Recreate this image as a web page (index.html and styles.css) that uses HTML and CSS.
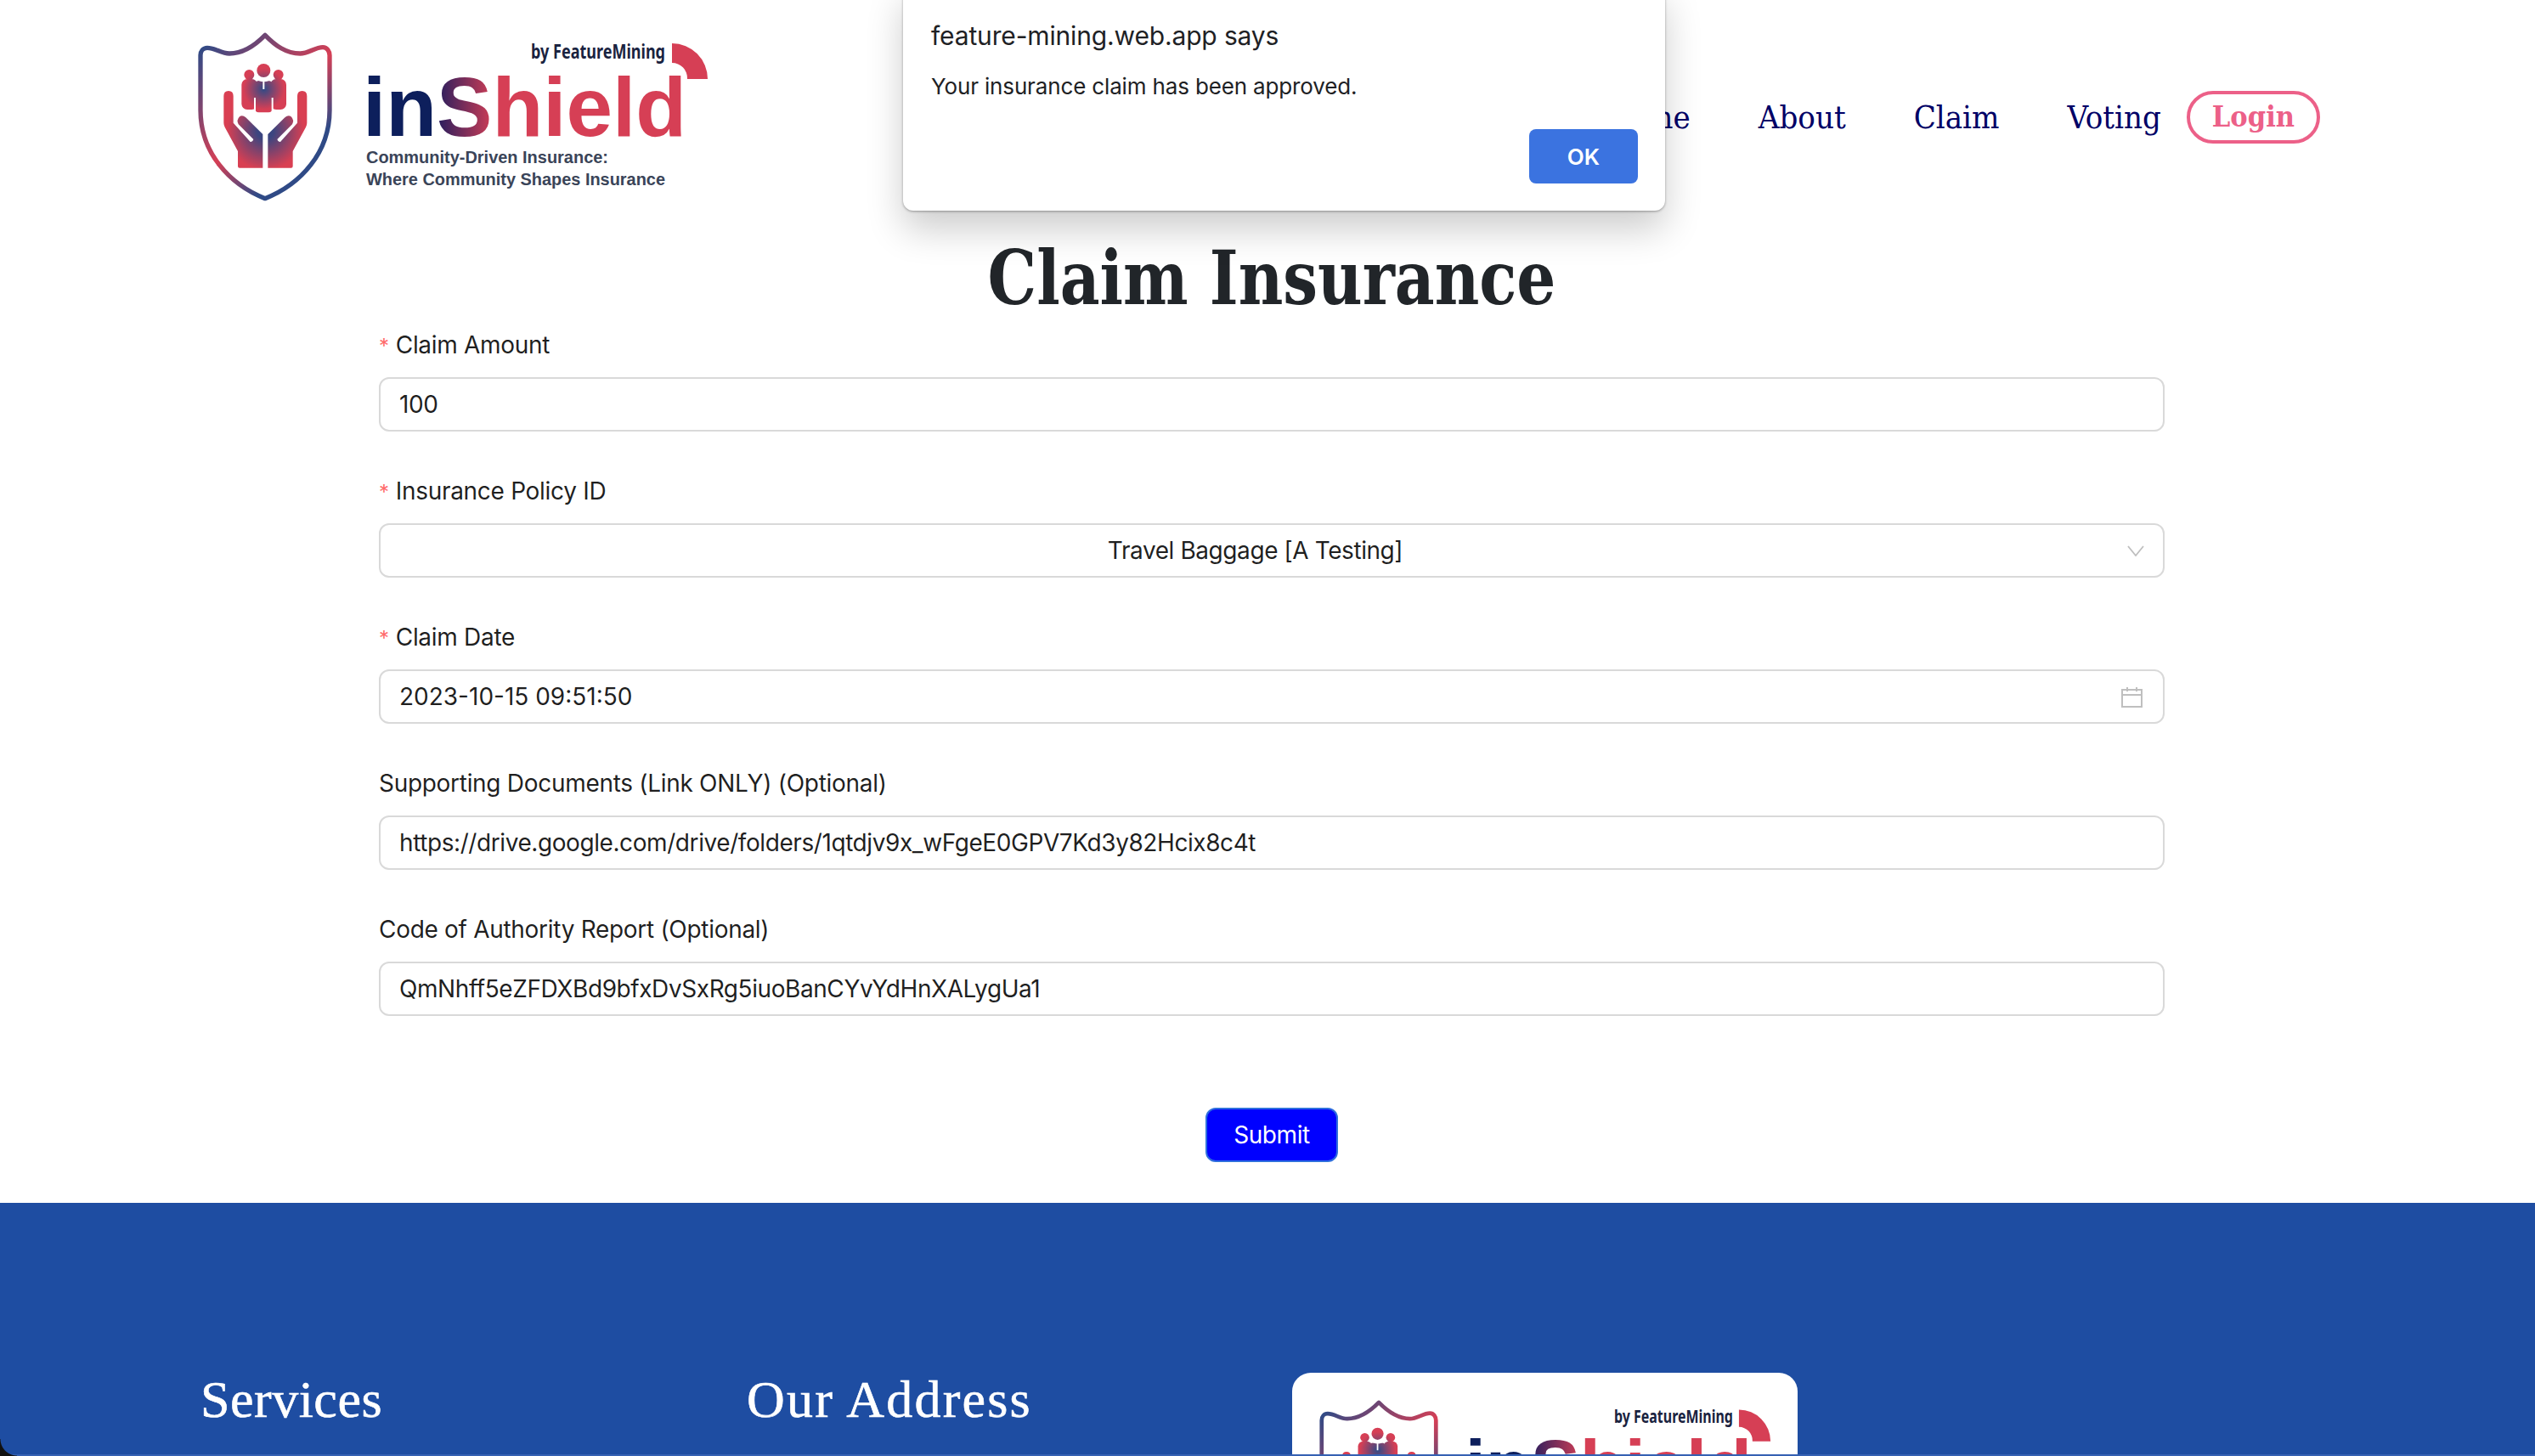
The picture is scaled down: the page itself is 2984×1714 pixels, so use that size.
FILE: index.html
```html
<!DOCTYPE html>
<html lang="en">
<head>
  <meta charset="UTF-8">
  <title>inShield - Claim Insurance</title>
  <link rel="stylesheet" href="styles.css">
</head>
<body>

  <!-- shared gradients and the shield mark, used by both logos -->
  <svg class="defs" width="0" height="0" aria-hidden="true">
    <defs>
      <linearGradient id="shield-stroke" gradientUnits="userSpaceOnUse" x1="48" y1="80" x2="504" y2="560">
        <stop offset="0" stop-color="#2f4a86"/>
        <stop offset="0.5" stop-color="#d63f55"/>
        <stop offset="0.78" stop-color="#2f4a86"/>
      </linearGradient>
      <radialGradient id="hands-fill" gradientUnits="userSpaceOnUse" cx="276" cy="375" r="135">
        <stop offset="0.2" stop-color="#3b4580"/>
        <stop offset="1" stop-color="#d93f52"/>
      </radialGradient>
      <radialGradient id="people-fill" gradientUnits="userSpaceOnUse" cx="272" cy="225" r="72">
        <stop offset="0" stop-color="#2f4a86"/>
        <stop offset="1" stop-color="#d63f55"/>
      </radialGradient>
      <linearGradient id="letter-s" gradientUnits="userSpaceOnUse" x1="284" y1="0" x2="350" y2="0">
        <stop offset="0" stop-color="#2e1f5e"/>
        <stop offset="1" stop-color="#d63f55"/>
      </linearGradient>
      <symbol id="shield-mark" viewBox="40 25 472 597">
        <path fill="none" stroke="url(#shield-stroke)" stroke-width="16" stroke-linejoin="round" d="M276 35C240 72 200 100 150 100C120 100 100 80 72 80C57 80 48 92 48 106L48 300C48 450 150 562 276 612C402 562 504 450 504 300L504 106C504 92 495 78 480 78C452 78 430 100 400 100C350 100 312 72 276 35Z"/>
        <g fill="url(#people-fill)">
          <circle cx="220" cy="175" r="18"/>
          <circle cx="323" cy="175" r="18"/>
          <rect x="193" y="190" width="56" height="108" rx="20"/>
          <rect x="295" y="190" width="56" height="108" rx="20"/>
          <ellipse cx="271" cy="160" rx="24" ry="24"/>
          <rect x="238" y="196" width="66" height="112" rx="16"/>
        </g>
        <path fill="none" stroke="#fff" stroke-width="6" d="M238 183C250 192 258 197 271 197C284 197 294 192 305 183M271 197L271 226M240 256V306M302 256V306"/>
        <path fill="url(#hands-fill)" id="hand-left" d="M130 250Q130 232 147 232Q164 232 164 250L164 345L224 412Q232 414 235 403L182 350Q174 335 186 323Q196 316 208 326L268 385L268 504L186 504Q180 504 180 498L180 445L134 360Q130 352 130 345Z"/>
        <use href="#hand-left" transform="matrix(-1 0 0 1 554 0)"/>
      </symbol>
    </defs>
  </svg>

  <header class="site-header">
    <svg class="logo" viewBox="0 0 602 200" width="602" height="200" role="img">
      <use href="#shield-mark" x="0" y="0" width="158" height="199"/>
      <text class="logo-by" x="392" y="31" textLength="158" lengthAdjust="spacingAndGlyphs">by FeatureMining</text>
      <path class="logo-arc" d="M558 13A42 42 0 0 1 600 55L576 55A18 18 0 0 0 558 36Z"/>
      <text class="logo-name" x="194" y="122"><tspan class="ink">in</tspan><tspan fill="url(#letter-s)">S</tspan><tspan class="red">hield</tspan></text>
      <text class="logo-tag" x="198" y="154" textLength="285" lengthAdjust="spacingAndGlyphs">Community-Driven Insurance:</text>
      <text class="logo-tag" x="198" y="180" textLength="352" lengthAdjust="spacingAndGlyphs">Where Community Shapes Insurance</text>
    </svg>
    <nav class="site-nav">
      <a href="#">Home</a>
      <a href="#">About</a>
      <a href="#">Claim</a>
      <a href="#">Voting</a>
      <a href="#" class="login">Login</a>
    </nav>
  </header>

  <main class="claim-page">
    <h1>Claim Insurance</h1>

    <form class="claim-form">
      <div class="form-item">
        <label class="required" for="amount">Claim Amount</label>
        <div class="control"><input id="amount" type="text" value="100"></div>
      </div>
      <div class="form-item">
        <label class="required">Insurance Policy ID</label>
        <div class="control select">
          <span class="select-value">Travel Baggage [A Testing]</span>
          <svg class="chevron" viewBox="0 0 20 13" width="20" height="13"><path d="M1 1L10 12L19 1" fill="none" stroke="#bfbfbf" stroke-width="1.8"/></svg>
        </div>
      </div>
      <div class="form-item">
        <label class="required" for="date">Claim Date</label>
        <div class="control">
          <input id="date" type="text" value="2023-10-15 09:51:50">
          <svg class="calendar" viewBox="0 0 25 25" width="25" height="25"><path d="M1 4H24V24H1ZM1 10H24M7 1V6M18 1V6" fill="none" stroke="#bfbfbf" stroke-width="2"/></svg>
        </div>
      </div>
      <div class="form-item">
        <label for="docs">Supporting Documents (Link ONLY) (Optional)</label>
        <div class="control"><input id="docs" type="text" value="https://drive.google.com/drive/folders/1qtdjv9x_wFgeE0GPV7Kd3y82Hcix8c4t"></div>
      </div>
      <div class="form-item">
        <label for="report">Code of Authority Report (Optional)</label>
        <div class="control"><input id="report" type="text" value="QmNhff5eZFDXBd9bfxDvSxRg5iuoBanCYvYdHnXALygUa1"></div>
      </div>
      <div class="form-actions">
        <button type="button" class="submit">Submit</button>
      </div>
    </form>
  </main>

  <footer class="site-footer">
    <div class="footer-col"><h2>Services</h2></div>
    <div class="footer-col"><h2>Our Address</h2></div>
    <div class="footer-card">
      <svg class="logo" viewBox="0 0 602 200" width="533" height="177" role="img">
        <use href="#shield-mark" x="0" y="0" width="158" height="199"/>
        <text class="logo-by" x="392" y="31" textLength="158" lengthAdjust="spacingAndGlyphs">by FeatureMining</text>
        <path class="logo-arc" d="M558 13A42 42 0 0 1 600 55L576 55A18 18 0 0 0 558 36Z"/>
        <text class="logo-name" x="194" y="122"><tspan class="ink">in</tspan><tspan fill="url(#letter-s)">S</tspan><tspan class="red">hield</tspan></text>
      </svg>
    </div>
  </footer>

  <!-- browser alert on top of the page -->
  <div class="alert-box">
    <p class="alert-title">feature-mining.web.app says</p>
    <p class="alert-text">Your insurance claim has been approved.</p>
    <div class="alert-actions"><button type="button" class="alert-ok">OK</button></div>
  </div>

  <div class="window-edge"></div>
  <div class="window-corner"></div>

</body>
</html>
```

FILE: styles.css
```css
html, body {
  height: 100%;
}
body {
  position: relative;
  margin: 0;
  height: 1714px;
  overflow: hidden;
  background: #fff;
  font-family: Inter, "Noto Sans", sans-serif;
  font-size: 28px;
  color: rgba(0,0,0,0.88);
}
.defs {
  position: absolute;
}

/* header */
.site-header {
  display: flex;
  justify-content: space-between;
  align-items: center;
  padding: 38px 253px 0 233px;
  height: 200px;
}
.logo {
  display: block;
  overflow: visible;
}
.logo-by {
  font-family: "Noto Sans", sans-serif;
  font-size: 24px;
  font-weight: 700;
  fill: #1a2340;
}
.logo-arc {
  fill: #d63f55;
}
.logo-name {
  font-family: "Liberation Sans", sans-serif;
  font-size: 98px;
  font-weight: 700;
}
.logo-name .ink {
  fill: #0d1f5c;
}
.logo-name .red {
  fill: #d63f55;
}
.logo-tag {
  font-family: "Liberation Sans", sans-serif;
  font-size: 20px;
  font-weight: 700;
  fill: #3a4458;
}
.site-nav {
  display: flex;
  align-items: center;
  gap: 80px;
  font-family: "DejaVu Serif Condensed", "DejaVu Serif", serif;
  font-size: 38px;
}
.site-nav a {
  color: #000066;
  text-decoration: none;
}
.site-nav .login {
  margin-left: -50px;
  padding: 0 26px;
  height: 62px;
  box-sizing: border-box;
  line-height: 52px;
  border: 4px solid #ec6088;
  border-radius: 31px;
  color: #ec6088;
  font-size: 34px;
  font-weight: 700;
}

/* claim form */
.claim-page {
  margin-left: 446px;
  width: 2102px;
}
h1 {
  margin: 36px 0 4px;
  height: 106px;
  line-height: 106px;
  text-align: center;
  font-family: "DejaVu Serif Condensed", "DejaVu Serif", serif;
  font-size: 88px;
  font-weight: 700;
  color: #212529;
  transform: scaleX(0.914);
}
.claim-form {
  letter-spacing: -0.42px;
}
.form-item {
  margin-bottom: 48px;
}
.form-item label {
  display: block;
  height: 44px;
  line-height: 44px;
  padding-bottom: 16px;
  letter-spacing: -0.3px;
}
.required::before {
  content: "*";
  display: inline-block;
  margin-right: 8px;
  font-size: 24px;
  color: #ff6b6b;
}
.control {
  display: flex;
  align-items: center;
  box-sizing: border-box;
  height: 64px;
  padding: 0 22px;
  background: #fff;
  border: 2px solid #d9d9d9;
  border-radius: 12px;
}
.control input {
  flex: 1;
  min-width: 0;
  padding: 0;
  border: none;
  outline: none;
  background: none;
  font: inherit;
  letter-spacing: inherit;
  color: inherit;
}
.control #date {
  letter-spacing: 0;
}
.select-value {
  flex: 1;
  text-align: center;
  padding-right: 19px;
}
.calendar {
  margin-right: 2px;
}
.form-actions {
  display: flex;
  justify-content: center;
  margin-top: 108px;
}
.submit {
  box-sizing: border-box;
  width: 156px;
  height: 64px;
  padding: 0;
  background: #0000ff;
  border: 2px solid #2f6fdd;
  border-radius: 12px;
  color: #fff;
  font: inherit;
  letter-spacing: inherit;
  cursor: pointer;
}

/* footer */
.site-footer {
  position: absolute;
  top: 1416px;
  left: 0;
  right: 0;
  bottom: 0;
  display: flex;
  box-sizing: border-box;
  padding: 200px 0 0 236px;
  background: #1e4da2;
  overflow: hidden;
}
.footer-col {
  width: 642px;
}
.footer-col:first-child {
  width: 643px;
}
.footer-col h2 {
  margin: 0;
  font-family: "Liberation Serif", serif;
  font-size: 62px;
  font-weight: 400;
  line-height: 62px;
  letter-spacing: 0.5px;
  -webkit-text-stroke: 0.6px #fff;
  color: #fff;
}
.footer-col:nth-child(2) h2 {
  letter-spacing: 2.2px;
}
.footer-card {
  width: 595px;
  height: 300px;
  padding: 32px;
  box-sizing: border-box;
  background: #fff;
  border-radius: 22px;
}

/* alert */
.alert-box {
  position: absolute;
  top: -20px;
  left: 1063px;
  box-sizing: border-box;
  width: 897px;
  height: 268px;
  padding: 42px 32px 0 33px;
  background: #fff;
  border-radius: 12px;
  box-shadow: 0 1px 3px rgba(0,0,0,0.35), 0 22px 44px rgba(0,0,0,0.2);
}
.alert-box p {
  margin: 0;
}
.alert-title {
  font-size: 30px;
  line-height: 40px;
  letter-spacing: -0.15px;
  color: #202124;
}
.alert-box .alert-text {
  margin-top: 22px;
  font-size: 26px;
  line-height: 36px;
  letter-spacing: -0.15px;
  color: #202124;
}
.alert-actions {
  display: flex;
  justify-content: flex-end;
  margin-top: 32px;
}
.alert-ok {
  width: 128px;
  height: 64px;
  border: none;
  border-radius: 8px;
  background: #3b73e0;
  color: #fff;
  font: 600 26px Inter, sans-serif;
}

/* screenshot window edge */
.window-edge {
  position: absolute;
  left: 0;
  right: 0;
  bottom: 0;
  height: 2px;
  background: #3561b3;
}
.window-corner {
  position: absolute;
  left: 0;
  bottom: 0;
  width: 20px;
  height: 20px;
  background: radial-gradient(circle at 100% 0, transparent 19px, #111 20px);
}
```
